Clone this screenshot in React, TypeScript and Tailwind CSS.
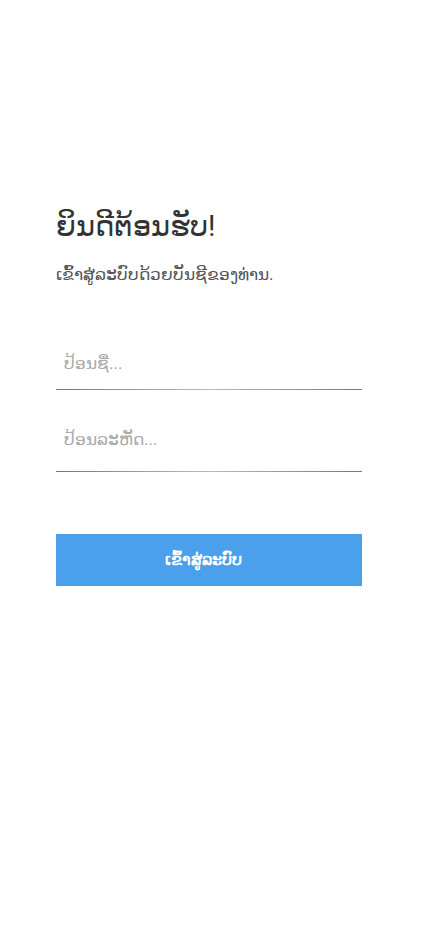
export default function App() {
  return (
    <div className="min-h-[926px] w-full bg-white font-['Roboto',sans-serif]">
      <div className="ml-14 w-[306px] pt-[204px]">
        <h1 className="text-[29px] font-normal leading-[44px] text-[#333]">ຍິນດີຕ້ອນຮັບ!</h1>
        <p className="mt-[14px] text-[17px] font-normal leading-6 text-[#555]">ເຂົ້າສູ່ລະບົບດ້ວຍບັນຊີຂອງທ່ານ.</p>

        <form className="mt-[51px] flex flex-col gap-[29px]">
          <label className="block">
            <input
              type="text"
              placeholder="ປ້ອນຊື່..."
              className="h-[52px] w-full px-2 text-[17px] text-[#333] outline-none placeholder:text-[#aaa]"
            />
            <div className="h-px w-full bg-[linear-gradient(to_right,#777,#bbb_50%,#777)]" />
          </label>
          <label className="block">
            <input
              type="password"
              placeholder="ປ້ອນລະຫັດ..."
              className="h-[52px] w-full px-2 pb-[12px] text-[17px] text-[#333] outline-none placeholder:text-[#aaa]"
            />
            <div className="h-px w-full bg-[linear-gradient(to_right,#777,#bbb_50%,#777)]" />
          </label>

          <button
            type="button"
            className="mt-[33px] h-[52px] w-full bg-[#4aa0ea] pr-3 text-[16px] font-semibold text-white"
          >
            ເຂົ້າສູ່ລະບົບ
          </button>
        </form>
      </div>
    </div>
  );
}
